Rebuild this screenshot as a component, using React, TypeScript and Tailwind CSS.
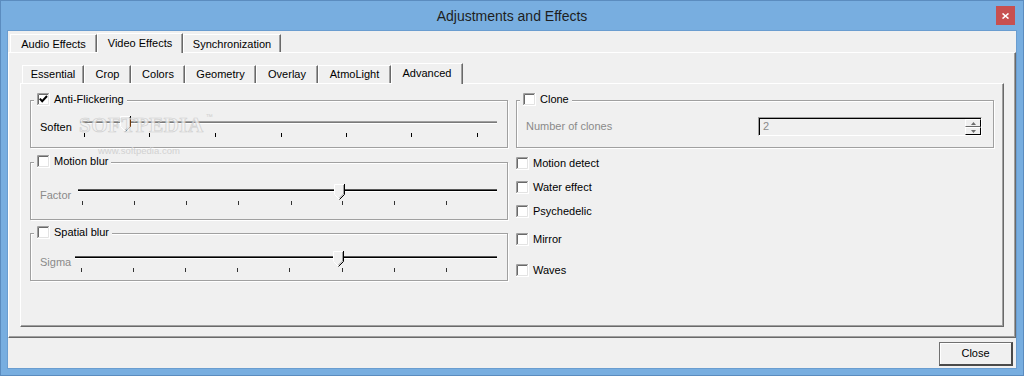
import React from "react";

const ChkBox = ({ checked = false }: { checked?: boolean }) => (
  <svg width={13} height={13} className="block shrink-0">
    <rect x={0} y={0} width={13} height={13} fill="#fff" />
    <path d="M0.5 12V0.5H12" stroke="#a0a0a0" fill="none" />
    <path d="M1.5 11V1.5H11" stroke="#696969" fill="none" />
    <path d="M0 12.5H12.5V0" stroke="#fff" fill="none" />
    <path d="M1 11.5H11.5V1" stroke="#e3e3e3" fill="none" />
    {checked && (
      <path d="M2.8 5.6L5.2 8.2L10 3" stroke="#000" strokeWidth={2} fill="none" />
    )}
  </svg>
);

type SliderProps = {
  w: number;
  trackEnd: number;
  thumbLeft: number;
  ticks: number[];
  enabled: boolean;
};

const Slider = ({ w, trackEnd, thumbLeft, ticks, enabled }: SliderProps) => (
  <svg width={w} height={22} className="block shrink-0">
    <rect x={2} y={5} width={trackEnd - 2} height={1} fill={enabled ? "#a0a0a0" : "#5a5a5a"} />
    <rect x={2} y={6} width={trackEnd - 2} height={1} fill={enabled ? "#7a7a7a" : "#000"} />
    <rect x={2} y={7} width={trackEnd - 2} height={1} fill="#fff" />
    {ticks.map((t) => (
      <rect key={t} x={t} y={17} width={1} height={4} fill={enabled ? "#000" : "#333"} />
    ))}
    <g transform={`translate(${thumbLeft},0)`}>
      <path d="M0 0H11V10.5L5.5 16L0 10.5Z" fill="#f0f0f0" />
      <path d="M0.5 10V0.5H10" stroke="#fff" fill="none" />
      <path d="M0.5 10.5L5 15" stroke="#fff" fill="none" />
      <path d="M9.5 1V10L5.5 14" stroke="#a0a0a0" fill="none" />
      <path d="M10.5 0V10.5L5.5 15.5" stroke="#000" fill="none" />
    </g>
  </svg>
);

const Group = ({
  title,
  checked = false,
  h,
  className = "",
  children,
}: {
  title: string;
  checked?: boolean;
  h: string;
  className?: string;
  children?: React.ReactNode;
}) => (
  <div
    className={`relative ${h} border border-[#a0a0a0] shadow-[inset_1px_1px_0_#fff,1px_1px_0_#fff] ${className}`}
  >
    <div className="absolute left-[3px] -top-[8px] px-[3px] bg-[#f0f0f0] flex items-center gap-[4px] h-[13px]">
      <ChkBox checked={checked} />
      <span className="leading-[13px]">{title}</span>
    </div>
    {children}
  </div>
);

const OuterTab = ({ label, w, selected = false }: { label: string; w: string; selected?: boolean }) =>
  selected ? (
    <div
      className={`relative z-10 ${w} h-[20px] -mb-[1px] bg-[#f0f0f0] border-t border-l border-white border-r border-r-[#696969] shadow-[inset_-1px_0_0_#a0a0a0] pt-[3px] text-center leading-[13px]`}
    >
      {label}
    </div>
  ) : (
    <div
      className={`${w} h-[18px] bg-[#f0f0f0] border-t border-l border-white border-r border-r-[#696969] shadow-[inset_-1px_0_0_#a0a0a0] pt-[3px] text-center leading-[13px]`}
    >
      {label}
    </div>
  );

const InnerTab = ({ label, w, selected = false }: { label: string; w: string; selected?: boolean }) =>
  selected ? (
    <div
      className={`relative z-10 ${w} h-[21px] -mb-[1px] bg-[#f0f0f0] border-t border-l border-white border-r border-r-[#696969] shadow-[inset_-1px_0_0_#a0a0a0] pt-[3px] text-center leading-[13px]`}
    >
      {label}
    </div>
  ) : (
    <div
      className={`${w} h-[18px] bg-[#f0f0f0] border-t border-l border-white border-r border-r-[#696969] shadow-[inset_-1px_0_0_#a0a0a0] pt-[2px] text-center leading-[13px]`}
    >
      {label}
    </div>
  );

const CheckItem = ({ label, className }: { label: string; className: string }) => (
  <div className={`flex items-center gap-[4px] h-[13px] ${className}`}>
    <ChkBox />
    <span className="leading-[13px]">{label}</span>
  </div>
);

export default function App() {
  return (
    <div className="relative w-[1024px] h-[376px] overflow-hidden border border-[#5b8cbf] bg-[#78aee0] flex flex-col font-['Liberation_Sans',Arial,sans-serif] text-[11px] leading-[13px] text-black">
      {/* title bar */}
      <div className="relative h-[29px] shrink-0 flex items-center justify-center">
        <span className="text-[14px] leading-[16px] text-[#1e1e1e] pt-[1px]">Adjustments and Effects</span>
        <div className="absolute right-[8px] top-[5px] w-[19px] h-[19px] bg-[#c75050] flex items-center justify-center">
          <svg width={7} height={6} className="block">
            <path d="M0.5 0.5L6.5 5.5M6.5 0.5L0.5 5.5" stroke="#fff" strokeWidth={1.6} fill="none" />
          </svg>
        </div>
      </div>

      {/* client */}
      <div className="mx-[6px] h-[339px] shrink-0 border border-[#6a9dd0] bg-[#f0f0f0] flex flex-col">
        {/* outer tabs */}
        <div className="h-[21px] shrink-0 pl-[2px] flex items-end">
          <OuterTab label="Audio Effects" w="w-[87px]" />
          <OuterTab label="Video Effects" w="w-[86px]" selected />
          <OuterTab label="Synchronization" w="w-[98px]" />
        </div>

        {/* outer pane */}
        <div className="h-[286px] shrink-0 border-t border-l border-white border-r border-b border-r-[#696969] border-b-[#696969] shadow-[inset_-1px_-1px_0_#a0a0a0] pt-[10px] pl-[11px] pr-[11px]">
          {/* inner tabs */}
          <div className="h-[20px] pl-[2px] flex items-end">
            <InnerTab label="Essential" w="w-[62px]" />
            <InnerTab label="Crop" w="w-[47px]" />
            <InnerTab label="Colors" w="w-[54px]" />
            <InnerTab label="Geometry" w="w-[71px]" />
            <InnerTab label="Overlay" w="w-[62px]" />
            <InnerTab label="AtmoLight" w="w-[73px]" />
            <InnerTab label="Advanced" w="w-[72px]" selected />
          </div>

          {/* inner pane */}
          <div className="h-[244px] border-t border-l border-white border-r border-b border-r-[#696969] border-b-[#696969] shadow-[inset_-1px_-1px_0_#a0a0a0] pt-[16px] pl-[9px] flex gap-[8px]">
            {/* left column */}
            <div className="w-[478px] flex flex-col">
              <Group title="Anti-Flickering" checked h="h-[48px]">
                <div className="mt-[15px] pl-[9px] flex items-start">
                  <span className="w-[38px] mt-[5px] leading-[13px]">Soften</span>
                  <Slider w={422} trackEnd={419} thumbLeft={42} ticks={[6, 71, 137, 203, 268, 333, 399]} enabled />
                </div>
              </Group>
              <Group title="Motion blur" h="h-[58px]" className="mt-[14px]">
                <div className="mt-[21px] pl-[9px] flex items-start">
                  <span className="w-[36px] mt-[5px] leading-[13px] text-[#8a8a8a]">Factor</span>
                  <Slider w={424} trackEnd={421} thumbLeft={258} ticks={[6, 58, 110, 162, 215, 266, 318, 370]} enabled={false} />
                </div>
              </Group>
              <Group title="Spatial blur" h="h-[48px]" className="mt-[13px]">
                <div className="mt-[17px] pl-[9px] flex items-start">
                  <span className="w-[33px] mt-[5px] leading-[13px] text-[#8a8a8a]">Sigma</span>
                  <Slider w={427} trackEnd={424} thumbLeft={260} ticks={[8, 60, 112, 164, 216, 269, 321, 373]} enabled={false} />
                </div>
              </Group>
            </div>

            {/* right column */}
            <div className="w-[478px] flex flex-col">
              <Group title="Clone" h="h-[48px]">
                <div className="mt-[16px] pl-[9px] pr-[11px] h-[19px] flex items-center">
                  <span className="flex-1 text-[#8a8a8a] leading-[13px]">Number of clones</span>
                  <div className="w-[224px] h-[19px] border border-t-[#a0a0a0] border-l-[#a0a0a0] border-b-white border-r-white shadow-[inset_1px_1px_0_#000] bg-[#f0f0f0] flex items-stretch">
                    <span className="flex-1 pl-[4px] pt-[2px] text-[#8a8a8a] leading-[13px]">2</span>
                    <div className="w-[16px] flex flex-col pt-[1px]">
                      <div className="flex-1 border-t border-l border-white border-r border-b border-r-[#000] border-b-[#696969] bg-[#f0f0f0] flex items-center justify-center">
                        <svg width={5} height={3} className="block">
                          <path d="M2.5 0L5 3H0Z" fill="#6d6d6d" />
                        </svg>
                      </div>
                      <div className="flex-1 border-t border-l border-white border-r border-b border-r-[#000] border-b-[#000] bg-[#f0f0f0] flex items-center justify-center">
                        <svg width={5} height={3} className="block">
                          <path d="M0 0H5L2.5 3Z" fill="#6d6d6d" />
                        </svg>
                      </div>
                    </div>
                  </div>
                </div>
              </Group>
              <CheckItem label="Motion detect" className="mt-[9px]" />
              <CheckItem label="Water effect" className="mt-[11px]" />
              <CheckItem label="Psychedelic" className="mt-[11px]" />
              <CheckItem label="Mirror" className="mt-[15px]" />
              <CheckItem label="Waves" className="mt-[18px]" />
            </div>
          </div>
        </div>

        {/* bottom */}
        <div className="flex-1 flex justify-end items-start pt-[4px] pr-[3px]">
          <button className="w-[74px] h-[24px] bg-[#f0f0f0] border border-[#707070] border-r-2 border-b-2 border-r-[#4a4a4a] border-b-[#4a4a4a] shadow-[inset_1px_1px_0_#fff] leading-[13px] text-black">
            Close
          </button>
        </div>
      </div>

      {/* watermark */}
      <div className="pointer-events-none absolute left-[78px] top-[112px] flex items-start">
        <span className="font-['Liberation_Serif',serif] font-bold text-[21px] leading-[24px] tracking-[0.5px] text-[#f3f3f3] [-webkit-text-stroke:0.7px_#c8c8c8] opacity-80">
          SOFTPEDIA
        </span>
        <span className="text-[7px] leading-[8px] text-[#cfcfcf] ml-[2px]">™</span>
      </div>
      <div className="pointer-events-none absolute left-[97px] top-[144px] text-[9.5px] leading-[11px] text-[#d2d2d2]">
        www.softpedia.com
      </div>
    </div>
  );
}
